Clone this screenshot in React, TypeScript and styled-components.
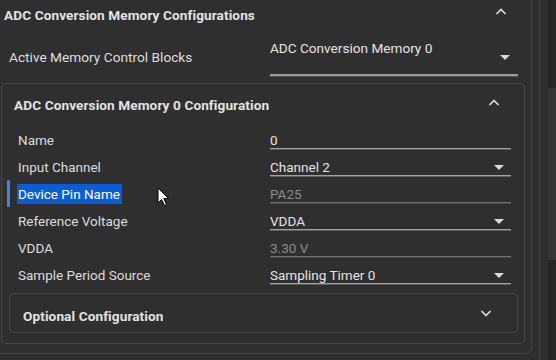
import React from "react";
import styled, { createGlobalStyle } from "styled-components";

const Global = createGlobalStyle`
  html, body { margin: 0; padding: 0; background: #2f2f2f; }
  body { font-family: Roboto, "Liberation Sans", Arial, sans-serif; overflow: hidden; }
  * { box-sizing: border-box; }
`;

const Root = styled.div`
  display: flex;
  width: 556px;
  height: 360px;
  overflow: hidden;
  background: #2f2f2f;
  position: relative;
`;

const Main = styled.div`
  width: 548px;
  flex: none;
`;

const Frame = styled.div`
  width: 540px;
  height: 400px;
  border-right: 1px solid #444444;
  padding-right: 7px;
`;

const Panel = styled.div`
  margin: -10px 0 0 -8px;
  width: 540px;
  border: 1px solid #454545;
  border-radius: 6px;
  padding-bottom: 9px;
`;

const PanelHeader = styled.div`
  height: 48px;
  display: flex;
  align-items: center;
  justify-content: space-between;
  padding-left: 11px;
  padding-right: 23px;
`;

const Title = styled.div`
  font-size: 13.6px;
  font-weight: 700;
  color: #e3e3e3;
  letter-spacing: 0.1px;
`;

const ActiveRow = styled.div`
  height: 44px;
  display: flex;
  align-items: flex-start;
  padding-left: 16px;
`;

const ActiveLabel = styled.div`
  width: 261px;
  margin-top: 9px;
  font-size: 13.7px;
  line-height: 18px;
  color: #dedede;
`;

const SelectField = styled.div`
  width: 248px;
  height: 37px;
  display: flex;
  justify-content: space-between;
  align-items: flex-start;
  border-bottom: 2px solid #9a9a9a;
  box-shadow: 0 1px 0 #555;
  padding-right: 8px;
`;

const BigValue = styled.div`
  font-size: 13.6px;
  line-height: 18px;
  color: #e4e4e4;
`;

const Caret = styled.span<{ $top?: number }>`
  width: 0;
  height: 0;
  margin-top: ${(p) => p.$top ?? 0}px;
  border-left: 5px solid transparent;
  border-right: 5px solid transparent;
  border-top: 5px solid #dadada;
`;

const Card = styled.div`
  margin-left: 8px;
  width: 524px;
  border: 1px solid #484848;
  border-radius: 5px;
  padding-bottom: 10px;
`;

const CardHeader = styled.div`
  height: 42px;
  display: flex;
  align-items: center;
  justify-content: space-between;
  padding-left: 12px;
  padding-right: 23px;
`;

const Rows = styled.div`
  padding-top: 1px;
  display: flex;
  flex-direction: column;
`;

const Row = styled.div`
  position: relative;
  height: 27px;
  display: grid;
  grid-template-columns: 268px 241px;
  align-items: start;
`;

const Label = styled.div`
  padding-left: 16px;
  font-size: 13.5px;
  line-height: 27px;
  color: #dcdcdc;
`;

const Selected = styled.span`
  background: #0b5dd3;
  color: #ffffff;
  padding: 2px 2px 2px 1px;
  margin-left: -1px;
`;

const FocusBar = styled.span`
  position: absolute;
  left: 5px;
  top: -1px;
  width: 3px;
  height: 27px;
  background: #3a86ea;
  border-radius: 1px;
`;

const Field = styled.div<{ $disabled?: boolean }>`
  margin-top: 5px;
  height: 17px;
  display: flex;
  justify-content: space-between;
  align-items: center;
  font-size: 13.5px;
  line-height: 16px;
  color: ${(p) => (p.$disabled ? "#8b8b8b" : "#e4e4e4")};
  border-bottom: 1px solid ${(p) => (p.$disabled ? "#6e6e6e" : "#a2a2a2")};
  box-shadow: 0 1px 0 ${(p) => (p.$disabled ? "#4a4a4a" : "#5e5e5e")};
  padding-right: 7px;
`;

const OptionalCard = styled.div`
  margin: 4px 0 0 7px;
  width: 509px;
  height: 40px;
  border: 1px solid #474747;
  border-radius: 5px;
  display: flex;
  align-items: center;
  justify-content: space-between;
  padding-left: 13px;
  padding-right: 24px;
`;

const OptionalTitle = styled(Title)`
  margin-top: 6px;
`;

const Scrollbar = styled.div`
  width: 8px;
  flex: none;
  background: #262626;
  padding-top: 88px;
`;

const Thumb = styled.div`
  height: 172px;
  background: #363636;
`;

const Cursor = styled.svg`
  position: absolute;
  left: 157px;
  top: 187px;
`;

const Chevron = ({ down = false, dy = 0 }: { down?: boolean; dy?: number }) => (
  <svg width="14" height="10" viewBox="0 0 14 10" style={{ marginTop: dy }}>
    <polyline
      points={down ? "2.5,3 7,7.5 11.5,3" : "2.5,7 7,2.5 11.5,7"}
      fill="none"
      stroke="#dcdcdc"
      strokeWidth="1.7"
    />
  </svg>
);

type RowData = { label: string; value: string; select?: boolean; disabled?: boolean; selected?: boolean };

const rows: RowData[] = [
  { label: "Name", value: "0" },
  { label: "Input Channel", value: "Channel 2", select: true },
  { label: "Device Pin Name", value: "PA25", disabled: true, selected: true },
  { label: "Reference Voltage", value: "VDDA", select: true },
  { label: "VDDA", value: "3.30 V", disabled: true },
  { label: "Sample Period Source", value: "Sampling Timer 0", select: true },
];

export default function App() {
  return (
    <Root>
      <Global />
      <Main>
        <Frame>
          <Panel>
            <PanelHeader>
              <Title>ADC Conversion Memory Configurations</Title>
              <Chevron dy={-6} />
            </PanelHeader>
            <ActiveRow>
              <ActiveLabel>Active Memory Control Blocks</ActiveLabel>
              <SelectField>
                <BigValue>ADC Conversion Memory 0</BigValue>
                <Caret $top={16} />
              </SelectField>
            </ActiveRow>
            <Card>
              <CardHeader>
                <Title>ADC Conversion Memory 0 Configuration</Title>
                <Chevron dy={-5} />
              </CardHeader>
              <Rows>
                {rows.map((r) => (
                  <Row key={r.label}>
                    {r.selected && <FocusBar />}
                    <Label>{r.selected ? <Selected>{r.label}</Selected> : r.label}</Label>
                    <Field $disabled={r.disabled}>
                      <span>{r.value}</span>
                      {r.select && <Caret />}
                    </Field>
                  </Row>
                ))}
              </Rows>
              <OptionalCard>
                <OptionalTitle>Optional Configuration</OptionalTitle>
                <Chevron down dy={-1} />
              </OptionalCard>
            </Card>
          </Panel>
        </Frame>
      </Main>
      <Scrollbar>
        <Thumb />
      </Scrollbar>
      <Cursor width="14" height="20" viewBox="0 0 14 20">
        <polygon
          points="1,1 1,16 4.5,12.5 7.5,18.5 9.5,17.5 6.8,11.5 11.5,11.5"
          fill="#ffffff"
          stroke="#000000"
          strokeWidth="1"
          strokeLinejoin="round"
        />
      </Cursor>
    </Root>
  );
}
